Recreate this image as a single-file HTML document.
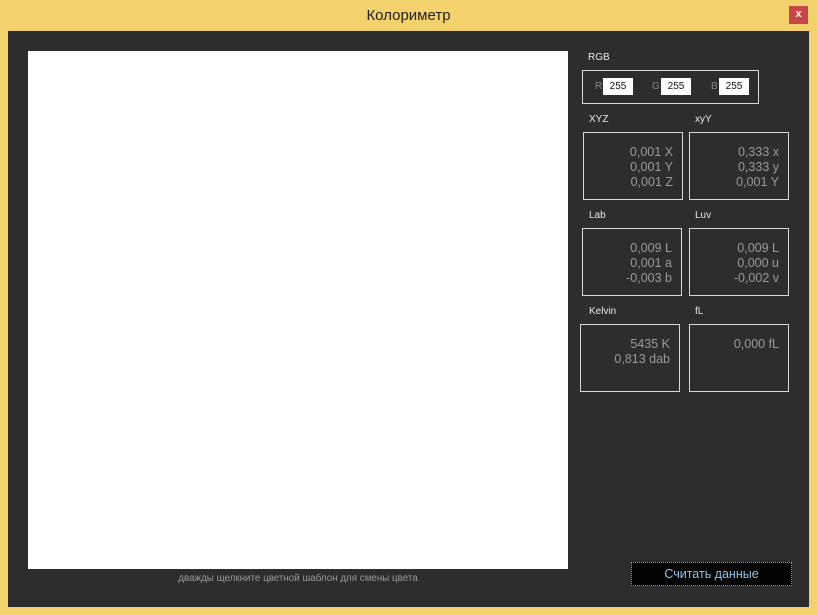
<!DOCTYPE html>
<html><head><meta charset="utf-8"><style>
body{margin:0;width:817px;height:615px;background:#f3d16d;position:relative;overflow:hidden;font-family:"Liberation Sans","DejaVu Sans",sans-serif}
.title{position:absolute;left:0;top:0;width:817px;height:31px;text-align:center;line-height:32px;font-size:15px;color:#222}
.close{position:absolute;left:789px;top:6px;width:19px;height:18px;background:#c9454a;color:#fff;font-size:11px;text-align:center;line-height:17px;font-weight:bold}
.main{position:absolute;left:8px;top:31px;width:801px;height:576px;background:#2d2d2d}
.canvas{position:absolute;left:28px;top:51px;width:540px;height:518px;background:#fff}
.hint{position:absolute;left:28px;width:540px;top:573px;text-align:center;font-size:9.8px;color:#9a9a9a}
.lbl{position:absolute;font-size:10px;color:#e8e8e8}
.box{position:absolute;border:1px solid #d8d8d8;box-sizing:border-box;color:#9a9a9a;font-size:12.5px;text-align:right;line-height:15px;padding-top:12px;padding-right:9px}
.in{position:absolute;top:78px;width:30px;height:17px;background:#fff;color:#111;font-size:10px;line-height:18px;text-align:center;box-sizing:border-box}
.il{position:absolute;top:78px;font-size:10px;color:#888;line-height:18px}
.btn{position:absolute;left:631px;top:562px;width:161px;height:24px;background:#030303;border:1px dotted #999;box-sizing:border-box;color:#8fc4e8;font-size:12.5px;text-align:center;line-height:22px}
</style></head><body>
<div class="title">Колориметр</div>
<div class="close">x</div>
<div class="main"></div>
<div class="canvas"></div>
<div class="hint">дважды щелкните цветной шаблон для смены цвета</div>
<div class="lbl" style="left:588px;top:52px">RGB</div>
<div class="box" style="left:582px;top:70px;width:177px;height:34px;padding:0"></div>
<div class="il" style="left:595px">R</div><div class="in" style="left:603px">255</div>
<div class="il" style="left:652px">G</div><div class="in" style="left:661px">255</div>
<div class="il" style="left:711px">B</div><div class="in" style="left:719px">255</div>
<div class="lbl" style="left:589px;top:114px">XYZ</div>
<div class="lbl" style="left:695px;top:114px">xyY</div>
<div class="box" style="left:583px;top:132px;width:100px;height:68px">0,001 X<br>0,001 Y<br>0,001 Z</div>
<div class="box" style="left:689px;top:132px;width:100px;height:68px">0,333 x<br>0,333 y<br>0,001 Y</div>
<div class="lbl" style="left:589px;top:210px">Lab</div>
<div class="lbl" style="left:695px;top:210px">Luv</div>
<div class="box" style="left:582px;top:228px;width:100px;height:68px">0,009 L<br>0,001 a<br>-0,003 b</div>
<div class="box" style="left:689px;top:228px;width:100px;height:68px">0,009 L<br>0,000 u<br>-0,002 v</div>
<div class="lbl" style="left:589px;top:306px">Kelvin</div>
<div class="lbl" style="left:695px;top:306px">fL</div>
<div class="box" style="left:580px;top:324px;width:100px;height:68px">5435 K<br>0,813 dab</div>
<div class="box" style="left:689px;top:324px;width:100px;height:68px">0,000 fL</div>
<div class="btn">Считать данные</div>
</body></html>
